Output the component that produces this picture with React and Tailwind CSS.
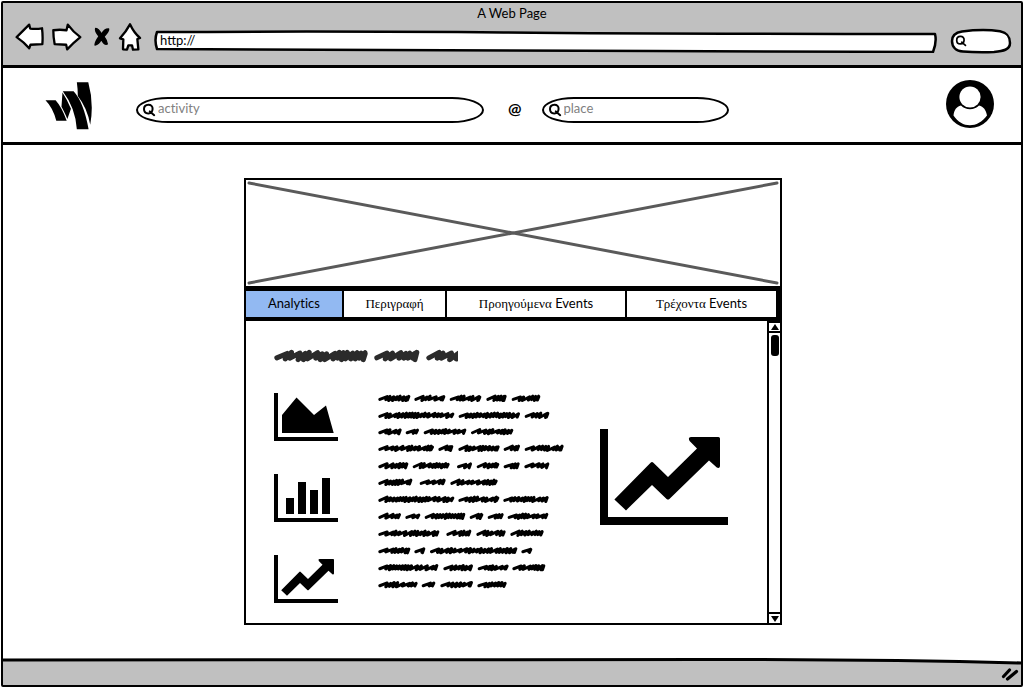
import React, { useState } from "react";

const HEADING_LINES = [{ y: 45, words: [[13, 293], [313, 448], [469, 572]] }];

const BODY_LINES = [
  { y: 52, words: [[28, 124], [136, 229], [242, 337], [352, 413], [428, 514]] },
  { y: 103, words: [[28, 256], [269, 453], [467, 541]] },
  { y: 152, words: [[28, 98], [110, 150], [164, 292], [306, 433]] },
  { y: 202, words: [[28, 195], [208, 253], [268, 392], [404, 453], [467, 584]] },
  { y: 254, words: [[28, 118], [131, 242], [264, 309], [323, 391], [404, 452], [466, 541]] },
  { y: 304, words: [[28, 130], [152, 230], [244, 386]] },
  { y: 355, words: [[28, 256], [268, 391], [403, 539]] },
  { y: 406, words: [[28, 96], [109, 154], [167, 289], [302, 343], [356, 404], [416, 538]] },
  { y: 457, words: [[28, 211], [232, 307], [322, 410], [424, 524]] },
  { y: 509, words: [[28, 124], [136, 169], [183, 445], [457, 490]] },
  { y: 560, words: [[28, 208], [223, 312], [326, 419], [430, 529]] },
  { y: 611, words: [[28, 146], [158, 199], [214, 312], [325, 413]] },
];

function scribble(y, [from, to], pen) {
  const half = pen.height / 2;
  const end = to - pen.stroke / 2;
  const back = pen.step * 0.4;
  let x = from + pen.stroke / 2;
  let seed = (from * 37 + Math.round(y) * 113) % 65536;
  let first = true;
  let d = `M${x} ${y + half * 0.5}`;
  while (x < end) {
    seed = (seed * 1109 + 12345) % 65536;
    const pick = (seed >> 6) % 16;
    const advance = pen.step * (first || pick < 4 ? 1.8 : 0.85 + (pick % 4) * 0.1);
    const topX = Math.min(x + advance + back, end);
    d += `L${topX} ${y - half * (0.6 + (pick % 5) * 0.1)}`;
    x = topX - back;
    d += `L${x} ${y + half * (0.6 + (pick % 3) * 0.2)}`;
    if (topX >= end) break;
    first = false;
  }
  return d;
}

function Scribbles({ lines, pen, viewBox, className, label }) {
  return (
    <svg role="img" aria-label={label} viewBox={viewBox} className={className}>
      {lines.map((line) =>
        line.words.map((word) => (
          <path
            key={`${line.y}-${word[0]}`}
            d={scribble(line.y, word, pen)}
            fill="none"
            stroke="currentColor"
            strokeWidth={pen.stroke}
            strokeLinecap="round"
            strokeLinejoin="round"
          />
        ))
      )}
    </svg>
  );
}

function Chart({ className, label, children }) {
  return (
    <svg role="img" aria-label={label} viewBox="0 0 64 48" className={className}>
      <path d="M0 0h4v44h60v4H0z" />
      {children}
    </svg>
  );
}

const TREND =
  "M7.2 35.2 25.3 16.9Q26 16.2 26.7 16.9L34 24 48.5 9.7 44.8 6Q43.8 4.2 45.5 4H59.2Q60 4 60 4.8V18.6Q59.6 20 58.4 19.3L54.5 15.7 34.7 35Q34 35.6 33.3 35L26 28 13 40.7z";

function SearchGlyph({ className }) {
  return (
    <svg viewBox="0 0 14 14" aria-hidden="true" className={className} fill="none" stroke="currentColor" strokeWidth="2" strokeLinecap="round">
      <path d="M6.3 1.7C9 1.6 10.8 3.4 10.6 6 10.4 8.8 8.7 10.5 6.2 10.4 3.4 10.3 2 8.6 2 6 2 3.5 3.6 1.8 6.3 1.7zM7.8 8.4 12.2 12.2" />
    </svg>
  );
}

function NavButton({ label, viewBox, className, children }) {
  return (
    <button type="button" aria-label={label} className="shrink-0">
      <svg viewBox={viewBox} className={className} fill="white" stroke="black" strokeWidth="7" strokeLinejoin="round" strokeLinecap="round">
        {children}
      </svg>
    </button>
  );
}

function BrowserBar() {
  return (
    <header className="border-b-[3px] border-black bg-[#c0c0c0] pb-[11px]">
      <h1 className="text-center text-[13px] leading-5">A Web Page</h1>
      <div className="flex items-start pl-3 pr-[9px] pt-[2px]">
        <div className="flex h-7 items-center">
          <NavButton label="Back" viewBox="45 70 88 80" className="mb-[6px] h-[27px] w-[29px]">
            <path d="M50 112 88 74 91 86Q110 88 127 85 130 110 128 133L92 135 88 146Q72 127 50 112z" />
          </NavButton>
          <NavButton label="Forward" viewBox="150 66 97 88" className="mb-[6px] ml-[6px] h-[29px] w-8">
            <path d="M160 91Q180 88 200 91L204 74Q220 96 242 112 220 130 202 149L199 135 164 133Q160 112 160 91z" />
          </NavButton>
          <NavButton label="Stop" viewBox="279 72 54 66" className="mb-[7px] ml-[11px] h-[22px] w-[18px]">
            <path fill="black" d="M287 82Q294 81 305 99 314 83 326 84 327 90 312 107 320 117 322 129 313 133 304 115 297 130 285 132 285 123 297 106 284 91 287 82z" strokeWidth="4" />
          </NavButton>
          <NavButton label="Home" viewBox="354 68 72 84" className="mb-1 ml-[7px] h-7 w-6">
            <path d="M390 72Q402 98 420 113L412 116 415 147 399 148 396 135 385 135 381 148 369 147 370 117 360 114Q378 94 390 72z" />
          </NavButton>
        </div>
        <div className="relative ml-3 mt-1 h-6 flex-1">
          <svg viewBox="0 0 784 24" preserveAspectRatio="none" aria-hidden="true" className="absolute inset-0 size-full" fill="white" stroke="black" strokeWidth="2.5" strokeLinejoin="round">
            <path d="M3 3Q200 2 350 3.5T782 5Q784 13 780 23L500 22 3 20Q0 11 3 3z" vectorEffect="non-scaling-stroke" />
          </svg>
          <input aria-label="Address" defaultValue="http://" className="relative block h-[22px] w-full bg-transparent px-[6px] text-[13px] outline-none" />
        </div>
        <div className="relative ml-[13px] mt-[3px] flex h-[26px] w-[62px] items-center">
          <svg viewBox="0 0 62 26" preserveAspectRatio="none" aria-hidden="true" className="absolute inset-0 size-full" fill="white" stroke="black" strokeWidth="2.5">
            <path d="M12 3.5Q33 .8 50 3.2C58 5 60 9 60 15 60 22 53 23 44 24Q26 24.5 13 23.5C6 23 2 19 2 13 2 8 6 4.5 12 3.5z" />
          </svg>
          <SearchGlyph className="relative ml-[5px] size-3 shrink-0" />
          <input type="search" aria-label="Search the web" className="relative w-9 min-w-0 bg-transparent text-xs outline-none" />
        </div>
      </div>
    </header>
  );
}

function SearchField({ label, className }) {
  return (
    <div className={`flex h-[26px] items-center rounded-[32px/13px] border-2 border-black bg-white pl-1 ${className}`}>
      <SearchGlyph className="size-[14px] shrink-0" />
      <input type="search" aria-label={label} placeholder={label} className="ml-0.5 min-w-0 flex-1 bg-transparent pb-0.5 text-[13px] outline-none [font-variant-ligatures:none] placeholder:text-[#808080]" />
    </div>
  );
}

function SiteBar() {
  return (
    <nav className="flex h-[77px] items-center border-b-[3px] border-black pl-[42px] pr-[27px]">
      <a href="#home" aria-label="Home page" className="pt-[2px]">
        <svg viewBox="14 19 146 147" className="size-12">
          <path d="M15 75H46Q65 96 80 138H48Q38 98 15 75z" />
          <path d="M67 51Q82 74 93 101L82 132Q70 105 64 95z" />
          <path d="M68 47H101Q132 80 147 164H111Q107 98 68 47z" />
          <path d="M111 20H146Q164 84 152 150 143 99 114 62 114 40 111 20z" />
        </svg>
      </a>
      <div className="flex flex-1 items-center pl-[43px] pt-[9px]">
        <SearchField label="activity" className="w-[348px] shrink" />
        <span className="ml-6 pb-[3px] text-[16px] font-bold leading-5">@</span>
        <SearchField label="place" className="ml-5 w-[187px] shrink" />
      </div>
      <a href="#profile" aria-label="Profile" className="mb-[2px]">
        <svg viewBox="0 0 48 48" className="size-12">
          <circle cx="24" cy="24" r="24" />
          <path fill="white" d="M7.5 35.5C8 30 10.5 26.5 15 25.5 20 30.5 28 30.5 33 25.5 37.5 26.5 40 30 41 35.5 31.5 48.5 16 48.5 7.5 35.5z" />
          <circle cx="24" cy="17" r="11.6" />
          <circle cx="24" cy="17" r="10.6" fill="white" />
        </svg>
      </a>
    </nav>
  );
}

const TABS = [
  { id: "analytics", greek: "", latin: "Analytics", width: "basis-[98px]" },
  { id: "description", greek: "Περιγραφή", latin: "", width: "basis-[103px]" },
  { id: "previous", greek: "Προηγούμενα", latin: "Events", width: "basis-[180px]" },
  { id: "current", greek: "Τρέχοντα", latin: "Events", width: "basis-[153px]" },
];

function EventCard() {
  const [active, setActive] = useState("analytics");
  return (
    <section className="mx-auto w-full max-w-[538px] border-2 border-black">
      <svg viewBox="0 0 534 106" preserveAspectRatio="none" role="img" aria-label="Cover image" className="block h-[106px] w-full" stroke="#5a5a5a" strokeWidth="3" strokeLinecap="round">
        <path d="M3 3 531 103M3 103 531 3" />
      </svg>
      <div role="tablist" className="flex h-[35px] border-b-4 border-t-[5px] border-black">
        {TABS.map((tab) => (
          <button
            key={tab.id}
            type="button"
            role="tab"
            id={`tab-${tab.id}`}
            aria-selected={active === tab.id}
            aria-controls="tab-panel"
            onClick={() => setActive(tab.id)}
            className={`${tab.width} shrink grow whitespace-nowrap border-r-2 border-black pb-0.5 text-[13px] leading-none [font-variant-ligatures:none] last:border-r-4 ${active === tab.id ? "bg-[#92b9f2]" : "bg-white"}`}
          >
            <span className="font-['Liberation_Serif',serif]">{tab.greek}</span>
            {tab.greek && tab.latin ? " " : ""}
            {tab.latin}
          </button>
        ))}
      </div>
      <div id="tab-panel" role="tabpanel" aria-labelledby={`tab-${active}`} className="flex">
        <div className="flex-1 pb-5 pl-7 pt-7">
          <Scribbles label="Heading" lines={HEADING_LINES} pen={{ height: 22, step: 14, stroke: 15 }} viewBox="12 24 552 42" className="h-[14px] w-[184px] text-[#2b2b2b]" />
          <div className="mt-[30px] flex">
            <div className="flex flex-col gap-[33px]">
              <Chart label="Area chart" className="h-12 w-16">
                <path d="M8 22 22.5 4.5 40 22 52 12.5 59.7 40H8z" />
              </Chart>
              <Chart label="Bar chart" className="h-12 w-16">
                <path d="M12 24h8v16h-8zM24 8h8v32h-8zM36 16h8v24h-8zM48 4h8v36h-8z" />
              </Chart>
              <Chart label="Line chart" className="h-12 w-16">
                <path d={TREND} />
              </Chart>
            </div>
            <Scribbles label="Description" lines={BODY_LINES} pen={{ height: 13, step: 10, stroke: 9 }} viewBox="27 36 561 588" className="ml-10 h-[196px] w-[187px]" />
            <Chart label="Growth" className="ml-[35px] mt-9 h-24 w-32">
              <path d={TREND} />
            </Chart>
          </div>
        </div>
        <div className="flex w-[13px] flex-col items-center border-l-2 border-black">
          <button type="button" aria-label="Scroll up" className="flex h-3 w-full items-center justify-center border-b-2 border-t-2 border-black">
            <svg viewBox="0 0 8 6" className="h-[6px] w-2">
              <path d="M4 0 8 6H0z" />
            </svg>
          </button>
          <div className="mt-[2px] h-[21px] w-2 rounded-[3px] bg-black" />
          <button type="button" aria-label="Scroll down" className="mt-auto flex h-[11px] w-full items-center justify-center border-t-2 border-black">
            <svg viewBox="0 0 8 6" className="h-[6px] w-2">
              <path d="M0 0H8L4 6z" />
            </svg>
          </button>
        </div>
      </div>
    </section>
  );
}

function StatusBar() {
  return (
    <footer className="relative flex h-[27px] items-center justify-end bg-[#c0c0c0] pr-[2px]">
      <svg viewBox="0 0 1018 27" preserveAspectRatio="none" aria-hidden="true" className="absolute inset-0 size-full">
        <path fill="white" d="M0 0H1018V4Q900 1 780 1L0 2z" />
        <path fill="none" stroke="black" strokeWidth="3" d="M0 2 700 1.5Q880 1.5 1018 5" />
      </svg>
      <svg viewBox="0 0 18 14" aria-hidden="true" className="relative mt-1 h-[14px] w-[18px]" stroke="black" strokeWidth="3.2" strokeLinecap="round" fill="none">
        <path d="M2.5 9.5 8.5 3M6.5 12 15.5 4.5" />
      </svg>
    </footer>
  );
}

export default function App() {
  return (
    <div className="min-h-screen bg-white p-px font-[Lato,'Noto_Sans',sans-serif] text-black">
      <div className="flex min-h-[calc(100vh-2px)] flex-col rounded-[2px] border-2 border-black">
        <BrowserBar />
        <SiteBar />
        <main className="flex-1 pb-8 pl-0.5 pt-[33px]">
          <EventCard />
        </main>
        <StatusBar />
      </div>
    </div>
  );
}
